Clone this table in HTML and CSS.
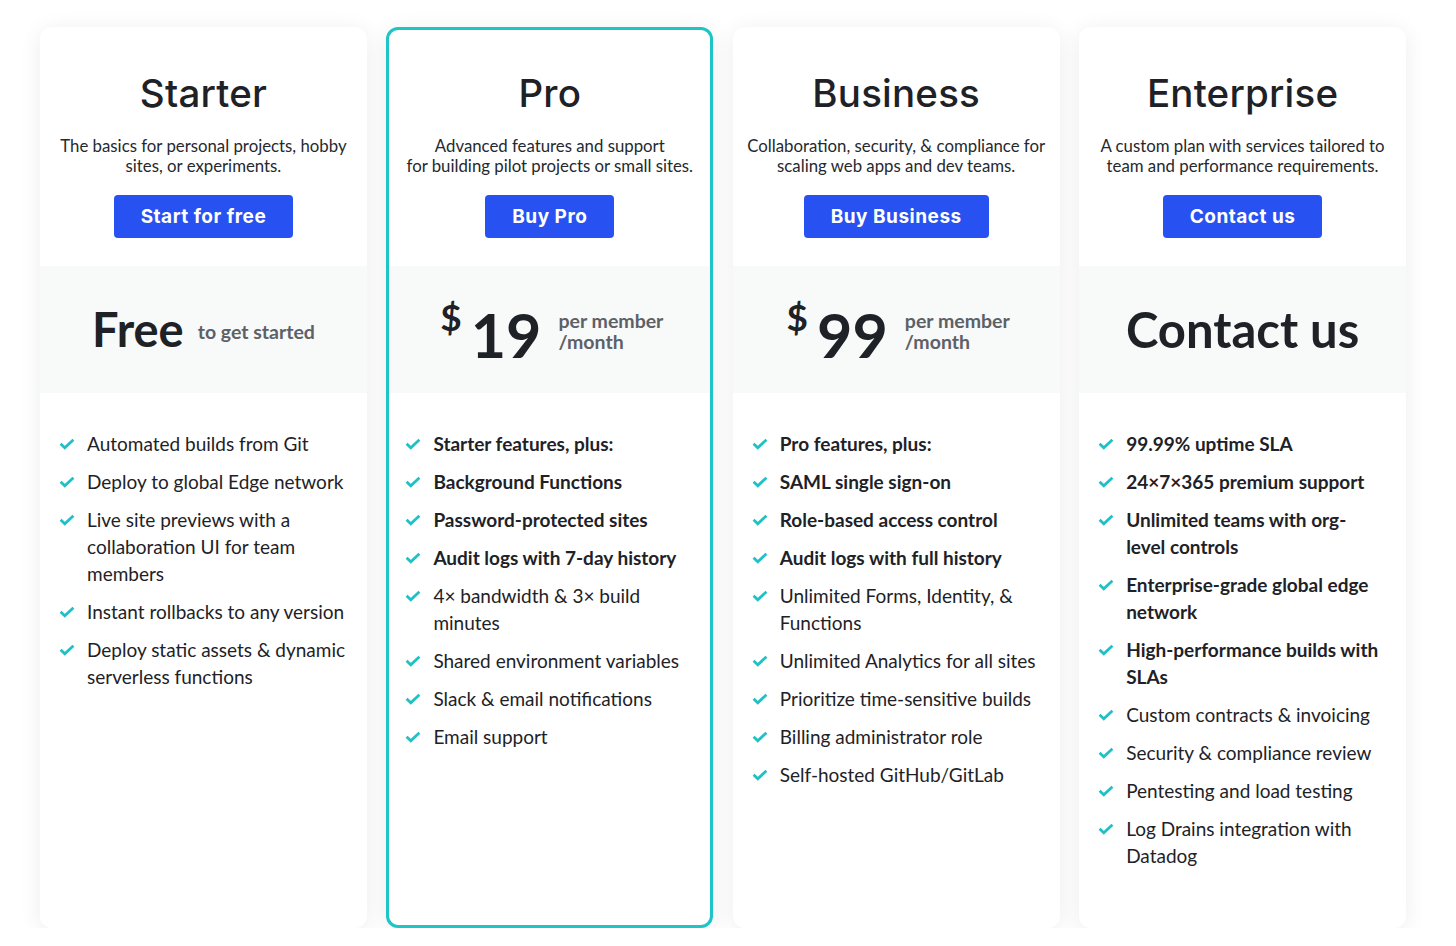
FILE: index.html
```html
<!DOCTYPE html>
<html>
<head>
<meta charset="utf-8"/>
<title>Pricing</title>
<link rel="stylesheet" href="styles.css">
</head>
<body>
<div class="plans">

<div class="plan">
  <div class="plan-head">
    <h2>Starter</h2>
    <p class="desc">The basics for personal projects, hobby<br>sites, or experiments.</p>
    <a class="btn" href="#">Start for free</a>
  </div>
  <div class="price">
    <span class="big">Free</span>
    <span class="note">to get started</span>
  </div>
  <ul class="features">
    <li><svg viewBox="0 0 16 12"><path d="M1.6 5.8 L5.8 9.8 L14.4 1.8"/></svg><span>Automated builds from Git</span></li>
    <li><svg viewBox="0 0 16 12"><path d="M1.6 5.8 L5.8 9.8 L14.4 1.8"/></svg><span>Deploy to global Edge network</span></li>
    <li><svg viewBox="0 0 16 12"><path d="M1.6 5.8 L5.8 9.8 L14.4 1.8"/></svg><span>Live site previews with a collaboration UI for team members</span></li>
    <li><svg viewBox="0 0 16 12"><path d="M1.6 5.8 L5.8 9.8 L14.4 1.8"/></svg><span>Instant rollbacks to any version</span></li>
    <li><svg viewBox="0 0 16 12"><path d="M1.6 5.8 L5.8 9.8 L14.4 1.8"/></svg><span>Deploy static assets &amp; dynamic serverless functions</span></li>
  </ul>
</div>

<div class="plan featured">
  <div class="plan-head">
    <h2>Pro</h2>
    <p class="desc">Advanced features and support<br>for building pilot projects or small sites.</p>
    <a class="btn" href="#">Buy Pro</a>
  </div>
  <div class="price">
    <span class="cur">$</span>
    <span class="num">19</span>
    <span class="per">per member<br>/month</span>
  </div>
  <ul class="features">
    <li class="strong"><svg viewBox="0 0 16 12"><path d="M1.6 5.8 L5.8 9.8 L14.4 1.8"/></svg><span>Starter features, plus:</span></li>
    <li class="strong"><svg viewBox="0 0 16 12"><path d="M1.6 5.8 L5.8 9.8 L14.4 1.8"/></svg><span>Background Functions</span></li>
    <li class="strong"><svg viewBox="0 0 16 12"><path d="M1.6 5.8 L5.8 9.8 L14.4 1.8"/></svg><span>Password-protected sites</span></li>
    <li class="strong"><svg viewBox="0 0 16 12"><path d="M1.6 5.8 L5.8 9.8 L14.4 1.8"/></svg><span>Audit logs with 7-day history</span></li>
    <li><svg viewBox="0 0 16 12"><path d="M1.6 5.8 L5.8 9.8 L14.4 1.8"/></svg><span>4× bandwidth &amp; 3× build minutes</span></li>
    <li><svg viewBox="0 0 16 12"><path d="M1.6 5.8 L5.8 9.8 L14.4 1.8"/></svg><span>Shared environment variables</span></li>
    <li><svg viewBox="0 0 16 12"><path d="M1.6 5.8 L5.8 9.8 L14.4 1.8"/></svg><span>Slack &amp; email notifications</span></li>
    <li><svg viewBox="0 0 16 12"><path d="M1.6 5.8 L5.8 9.8 L14.4 1.8"/></svg><span>Email support</span></li>
  </ul>
</div>

<div class="plan">
  <div class="plan-head">
    <h2>Business</h2>
    <p class="desc">Collaboration, security, &amp; compliance for<br>scaling web apps and dev teams.</p>
    <a class="btn" href="#">Buy Business</a>
  </div>
  <div class="price">
    <span class="cur">$</span>
    <span class="num">99</span>
    <span class="per">per member<br>/month</span>
  </div>
  <ul class="features">
    <li class="strong"><svg viewBox="0 0 16 12"><path d="M1.6 5.8 L5.8 9.8 L14.4 1.8"/></svg><span>Pro features, plus:</span></li>
    <li class="strong"><svg viewBox="0 0 16 12"><path d="M1.6 5.8 L5.8 9.8 L14.4 1.8"/></svg><span>SAML single sign-on</span></li>
    <li class="strong"><svg viewBox="0 0 16 12"><path d="M1.6 5.8 L5.8 9.8 L14.4 1.8"/></svg><span>Role-based access control</span></li>
    <li class="strong"><svg viewBox="0 0 16 12"><path d="M1.6 5.8 L5.8 9.8 L14.4 1.8"/></svg><span>Audit logs with full history</span></li>
    <li><svg viewBox="0 0 16 12"><path d="M1.6 5.8 L5.8 9.8 L14.4 1.8"/></svg><span>Unlimited Forms, Identity, &amp; Functions</span></li>
    <li><svg viewBox="0 0 16 12"><path d="M1.6 5.8 L5.8 9.8 L14.4 1.8"/></svg><span>Unlimited Analytics for all sites</span></li>
    <li><svg viewBox="0 0 16 12"><path d="M1.6 5.8 L5.8 9.8 L14.4 1.8"/></svg><span>Prioritize time-sensitive builds</span></li>
    <li><svg viewBox="0 0 16 12"><path d="M1.6 5.8 L5.8 9.8 L14.4 1.8"/></svg><span>Billing administrator role</span></li>
    <li><svg viewBox="0 0 16 12"><path d="M1.6 5.8 L5.8 9.8 L14.4 1.8"/></svg><span>Self-hosted GitHub/GitLab</span></li>
  </ul>
</div>

<div class="plan">
  <div class="plan-head">
    <h2>Enterprise</h2>
    <p class="desc">A custom plan with services tailored to<br>team and performance requirements.</p>
    <a class="btn" href="#">Contact us</a>
  </div>
  <div class="price">
    <span class="big contact">Contact us</span>
  </div>
  <ul class="features narrow">
    <li class="strong"><svg viewBox="0 0 16 12"><path d="M1.6 5.8 L5.8 9.8 L14.4 1.8"/></svg><span>99.99% uptime SLA</span></li>
    <li class="strong"><svg viewBox="0 0 16 12"><path d="M1.6 5.8 L5.8 9.8 L14.4 1.8"/></svg><span>24×7×365 premium support</span></li>
    <li class="strong"><svg viewBox="0 0 16 12"><path d="M1.6 5.8 L5.8 9.8 L14.4 1.8"/></svg><span>Unlimited teams with org-level controls</span></li>
    <li class="strong"><svg viewBox="0 0 16 12"><path d="M1.6 5.8 L5.8 9.8 L14.4 1.8"/></svg><span>Enterprise-grade global edge network</span></li>
    <li class="strong"><svg viewBox="0 0 16 12"><path d="M1.6 5.8 L5.8 9.8 L14.4 1.8"/></svg><span>High-performance builds with SLAs</span></li>
    <li><svg viewBox="0 0 16 12"><path d="M1.6 5.8 L5.8 9.8 L14.4 1.8"/></svg><span>Custom contracts &amp; invoicing</span></li>
    <li><svg viewBox="0 0 16 12"><path d="M1.6 5.8 L5.8 9.8 L14.4 1.8"/></svg><span>Security &amp; compliance review</span></li>
    <li><svg viewBox="0 0 16 12"><path d="M1.6 5.8 L5.8 9.8 L14.4 1.8"/></svg><span>Pentesting and load testing</span></li>
    <li><svg viewBox="0 0 16 12"><path d="M1.6 5.8 L5.8 9.8 L14.4 1.8"/></svg><span>Log Drains integration with Datadog</span></li>
  </ul>
</div>

</div>
</body>
</html>
```

FILE: styles.css
```css
body {
   margin: 0;
   background-color: white;
   font-family: Lato, "Open Sans", sans-serif;
   color: #1e2227;
}

.plans {
   display: grid;
   grid-template-columns: repeat(4, 1fr);
   gap: 19.5px;
   width: 1366px;
   margin: 27px 0 0 40px;
}

.plan {
   box-sizing: border-box;
   height: 901px;
   background: white;
   border-radius: 12px;
   box-shadow: 0 3px 22px rgba(0, 0, 0, 0.075);
   overflow: hidden;
}

.plan.featured {
   border: 3px solid #1ec4c6;
}

.plan-head {
   display: flex;
   flex-direction: column;
   align-items: center;
   padding: 42px 6px 28px;
   text-align: center;
}

.featured .plan-head {
   padding-top: 39px;
}

h2 {
   margin: 0;
   font-family: Inter, sans-serif;
   font-weight: 500;
   font-size: 38.5px;
   line-height: 48px;
   letter-spacing: 0.2px;
}

.desc {
   margin: 19px 0 19px;
   font-size: 16.8px;
   line-height: 20px;
   color: #25292e;
}

.btn {
   display: block;
   box-sizing: border-box;
   height: 43px;
   padding: 0 27px;
   border-radius: 4px;
   background: #2851f1;
   color: white;
   font-family: Inter, sans-serif;
   font-weight: 700;
   font-size: 19px;
   line-height: 43px;
   letter-spacing: 0.5px;
   text-decoration: none;
}

.price {
   display: flex;
   align-items: center;
   justify-content: center;
   height: 127px;
   background: #f8f9f9;
   font-weight: 700;
}

.big {
   font-size: 47px;
   line-height: 1;
}

.big.contact {
   font-size: 49px;
}

.note {
   margin: 4px 0 0 14px;
   font-size: 19.5px;
   color: #5c6168;
}

.cur {
   align-self: flex-start;
   margin: 32px 0 0 4px;
   font-size: 37px;
   line-height: 1;
}

.num {
   margin: 10px 0 0 9px;
   font-size: 61px;
   line-height: 1;
}

.per {
   margin: 2px 0 0 17px;
   font-size: 19.5px;
   line-height: 21px;
   color: #5c6168;
}

.features {
   list-style: none;
   margin: 0;
   padding: 37px 14px 0 19px;
}

.features.narrow {
   padding-right: 22px;
}

.features li {
   display: flex;
   align-items: flex-start;
   gap: 12px;
   margin-bottom: 11px;
   font-size: 19px;
   line-height: 27px;
}

.features li.strong {
   font-weight: 700;
}

.features svg {
   flex: none;
   width: 16px;
   height: 12px;
   margin-top: 8px;
   fill: none;
   stroke: #1fc0c6;
   stroke-width: 2.8;
}

.featured .features {
   padding-left: 16px;
}
```
